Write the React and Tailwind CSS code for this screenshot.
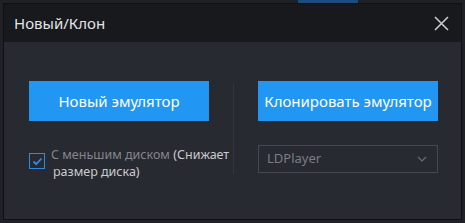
import React from 'react';

const font = { fontFamily: '"Noto Sans", "Open Sans", sans-serif' };

const App = () => {
  return (
    <div className="w-[465px] h-[223px] bg-[#202126] flex flex-col overflow-hidden" style={font}>
      {/* strip behind the dialog */}
      <div className="h-[3px] flex shrink-0">
        <div className="w-[298px]" />
        <div className="w-[60px] bg-[#1d4d80]" />
      </div>

      {/* Dialog */}
      <div className="mx-[3px] w-[459px] h-[217px] border border-[#0f1013] flex flex-col">
        {/* Title bar */}
        <div className="h-[38px] bg-[#18191d] flex items-center justify-between pl-[10px] pr-[12px] shrink-0">
          <span className="text-[15px] text-[#e4e4e6] leading-none">Новый/Клон</span>
          <svg width="15" height="15" viewBox="0 0 15 15" className="text-[#c9cacd]">
            <path d="M1 1L14 14M14 1L1 14" stroke="currentColor" strokeWidth="1.6" />
          </svg>
        </div>

        {/* Body */}
        <div className="flex-1 bg-[#282a31] flex pt-[39px] pl-[25px]">
          <div className="w-[180px] flex flex-col">
            <button className="h-[40px] w-[180px] bg-[#2196f3] text-white text-[15px]">
              Новый эмулятор
            </button>
            <div className="flex mt-[32px]">
              <div className="w-[16px] h-[16px] border border-[#2e8be0] flex items-center justify-center shrink-0">
                <svg width="11" height="9" viewBox="0 0 11 9">
                  <path d="M1.5 4.5L4.2 7.2L9.5 1.5" fill="none" stroke="#2e8be0" strokeWidth="1.8" />
                </svg>
              </div>
              <p className="ml-[6px] text-[12.5px] leading-[17px] text-[#c9cacd] shrink-0 whitespace-nowrap -mt-[7px]">
                <span className="text-[#83858c]">С меньшим диском</span> (Снижает
                <br />
                <span className="ml-[2px]">размер диска)</span>
              </p>
            </div>
          </div>

          <div className="w-px bg-[#33353d] ml-[24px] mt-[3px] h-[90px]" />

          <div className="w-[180px] flex flex-col ml-[24px]">
            <button className="h-[40px] w-[180px] bg-[#2196f3] text-white text-[15px]">
              Клонировать эмулятор
            </button>
            <div className="mt-[24px] h-[28px] w-[180px] border border-[#464851] flex items-center justify-between pl-[8px] pr-[10px]">
              <span className="text-[13px] text-[#7b7d84]">LDPlayer</span>
              <svg width="10" height="6" viewBox="0 0 10 6">
                <path d="M1 1L5 5L9 1" fill="none" stroke="#6b6d74" strokeWidth="1.2" />
              </svg>
            </div>
          </div>
        </div>
      </div>
    </div>
  );
};

export default App;
